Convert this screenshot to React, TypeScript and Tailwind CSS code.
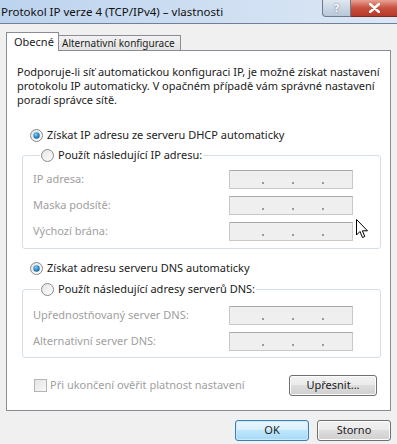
import React from "react";

const FONT = { fontFamily: '"Noto Sans", "Open Sans", sans-serif' };

function Radio({ checked }: { checked?: boolean }) {
  return (
    <svg width="13" height="13" viewBox="0 0 13 13" className="shrink-0">
      <defs>
        <linearGradient id="rb" x1="0" y1="0" x2="1" y2="1">
          <stop offset="0" stopColor="#e3e3e3" />
          <stop offset="1" stopColor="#ffffff" />
        </linearGradient>
        <radialGradient id="rd" cx="0.4" cy="0.35" r="0.7">
          <stop offset="0" stopColor="#8ad0f5" />
          <stop offset="0.6" stopColor="#2a86c8" />
          <stop offset="1" stopColor="#1a5c9a" />
        </radialGradient>
      </defs>
      <circle cx="6.5" cy="6.5" r="6" fill="url(#rb)" stroke="#8a8a8a" strokeWidth="1" />
      {checked && <circle cx="6.5" cy="6.5" r="3.2" fill="url(#rd)" />}
    </svg>
  );
}

function IpBox() {
  return (
    <div className="w-[124px] h-[19px] border border-[#c9c9c9] border-t-[#a9a9a9] bg-[#efefef] flex items-end pb-[4px] pl-[32px] gap-[28px]">
      <span className="w-[2px] h-[2px] bg-[#9a9a9a]" />
      <span className="w-[2px] h-[2px] bg-[#9a9a9a]" />
      <span className="w-[2px] h-[2px] bg-[#9a9a9a]" />
    </div>
  );
}

function Row({ label }: { label: string }) {
  return (
    <div className="flex items-center justify-between h-[19px]">
      <span className="text-[#a0a0a0]">{label}</span>
      <IpBox />
    </div>
  );
}

function Button({ children, primary, className = "" }: { children: React.ReactNode; primary?: boolean; className?: string }) {
  return (
    <div
      className={`h-[21px] rounded-[3px] border flex items-center justify-center ${
        primary
          ? "border-[#3c7fb1] bg-[linear-gradient(#eaf6fd_0%,#d9f0fc_45%,#bee6fd_50%,#a7d9f5_100%)] shadow-[inset_0_0_0_1px_#cbe9fa]"
          : "border-[#707070] bg-[linear-gradient(#f2f2f2_0%,#ebebeb_45%,#dddddd_50%,#cfcfcf_100%)] shadow-[inset_0_0_0_1px_#fcfcfc]"
      } ${className}`}
    >
      {children}
    </div>
  );
}

export default function App() {
  return (
    <div className="relative w-[397px] h-[444px] bg-[#f0f0f0] text-[11px] text-[#1b1b1b] overflow-hidden flex flex-col" style={FONT}>
      {/* Title bar */}
      <div className="h-[24px] shrink-0 flex items-start justify-between border-b border-[#6f8098] bg-[linear-gradient(90deg,#bcd3ee_0%,#cfdff2_55%,#dbe7f5_100%)]">
        <span className="pl-[1px] pt-[3px] text-[11.5px] text-[#101010] whitespace-nowrap">Protokol IP verze 4 (TCP/IPv4) – vlastnosti</span>
        <div className="flex">
          <div className="w-[29px] h-[17px] rounded-bl-[4px] border border-t-0 border-[#6b7a8f] bg-[linear-gradient(#dfe7f1,#b8c6d8)] flex items-center justify-center text-[11px] font-bold text-white [text-shadow:0_0_2px_#56667c]">
            ?
          </div>
          <div className="w-[46px] h-[17px] border-b border-[#7a2a22] bg-[linear-gradient(#e8a294,#c7503e_50%,#b8382a)] flex items-center justify-center">
            <svg width="11" height="10" viewBox="0 0 11 10">
              <path d="M1 1 L10 9 M10 1 L1 9" stroke="#ffffff" strokeWidth="2.4" strokeLinecap="round" />
            </svg>
          </div>
        </div>
      </div>

      {/* Body */}
      <div className="px-[6px] pt-[8px] flex flex-col">
        {/* Tabs */}
        <div className="flex items-end h-[19px] -mb-[1px] relative z-10">
          <div className="h-[19px] w-[53px] bg-white border border-b-0 border-[#898c95] pl-[7px] pt-[1px] whitespace-nowrap">Obecné</div>
          <div className="h-[16px] w-[122px] border border-l-0 border-[#898c95] bg-[linear-gradient(#f2f2f2,#e2e2e2)] pl-[3px] text-[10px] leading-[14px] whitespace-nowrap">
            Alternativní konfigurace
          </div>
        </div>

        {/* Panel */}
        <div className="w-[385px] h-[361px] bg-white border border-[#898c95] flex flex-col">
          <p className="pl-[10px] pt-[14px] leading-[14px] whitespace-nowrap">
            Podporuje-li síť automatickou konfiguraci IP, je možné získat nastavení
            <br />
            protokolu IP automaticky. V opačném případě vám správné nastavení
            <br />
            poradí správce sítě.
          </p>

          <div className="mt-[18px] ml-[23px] h-[20px] flex items-center gap-[4px]">
            <Radio checked />
            <span>Získat IP adresu ze serveru DHCP automaticky</span>
          </div>

          <fieldset className="ml-[15px] mr-[9px] border border-[#d5dfe5] rounded-[3px] px-[10px] pr-[27px] pt-[5px] pb-[7px] flex flex-col gap-[7px]">
            <legend className="ml-[7px] px-[1px] h-[20px] flex items-center gap-[4px]">
              <Radio />
              <span>Použít následující IP adresu:</span>
            </legend>
            <Row label="IP adresa:" />
            <Row label="Maska podsítě:" />
            <Row label="Výchozí brána:" />
          </fieldset>

          <div className="mt-[9px] ml-[23px] h-[20px] flex items-center gap-[4px]">
            <Radio checked />
            <span>Získat adresu serveru DNS automaticky</span>
          </div>

          <fieldset className="mt-[1px] ml-[15px] mr-[9px] border border-[#d5dfe5] rounded-[3px] px-[10px] pr-[27px] pt-[7px] pb-[6px] flex flex-col gap-[7px]">
            <legend className="ml-[7px] px-[1px] h-[20px] flex items-center gap-[4px]">
              <Radio />
              <span>Použít následující adresy serverů DNS:</span>
            </legend>
            <Row label="Upřednostňovaný server DNS:" />
            <Row label="Alternativní server DNS:" />
          </fieldset>

          <div className="mt-[17px] pl-[27px] pr-[13px] flex items-center justify-between">
            <div className="flex items-center gap-[3px]">
              <div className="w-[13px] h-[13px] border border-[#b5b5b5] bg-[linear-gradient(135deg,#e6e6e6,#f8f8f8)]" />
              <span className="text-[#a0a0a0]">Při ukončení ověřit platnost nastavení</span>
            </div>
            <Button className="w-[88px]">Upřesnit...</Button>
          </div>
        </div>

        {/* Dialog buttons */}
        <div className="mt-[9px] flex justify-end gap-[8px]">
          <Button primary className="w-[74px]">OK</Button>
          <Button className="w-[74px]">Storno</Button>
        </div>
      </div>

      {/* Mouse cursor */}
      <svg className="absolute left-[356px] top-[219px]" width="13" height="21" viewBox="0 0 13 21">
        <path d="M0.5 0.5 L0.5 16 L4 12.5 L6.5 18.5 L8.8 17.5 L6.4 11.8 L11.5 11.8 Z" fill="#ffffff" stroke="#000000" strokeWidth="1" strokeLinejoin="round" />
      </svg>
    </div>
  );
}
